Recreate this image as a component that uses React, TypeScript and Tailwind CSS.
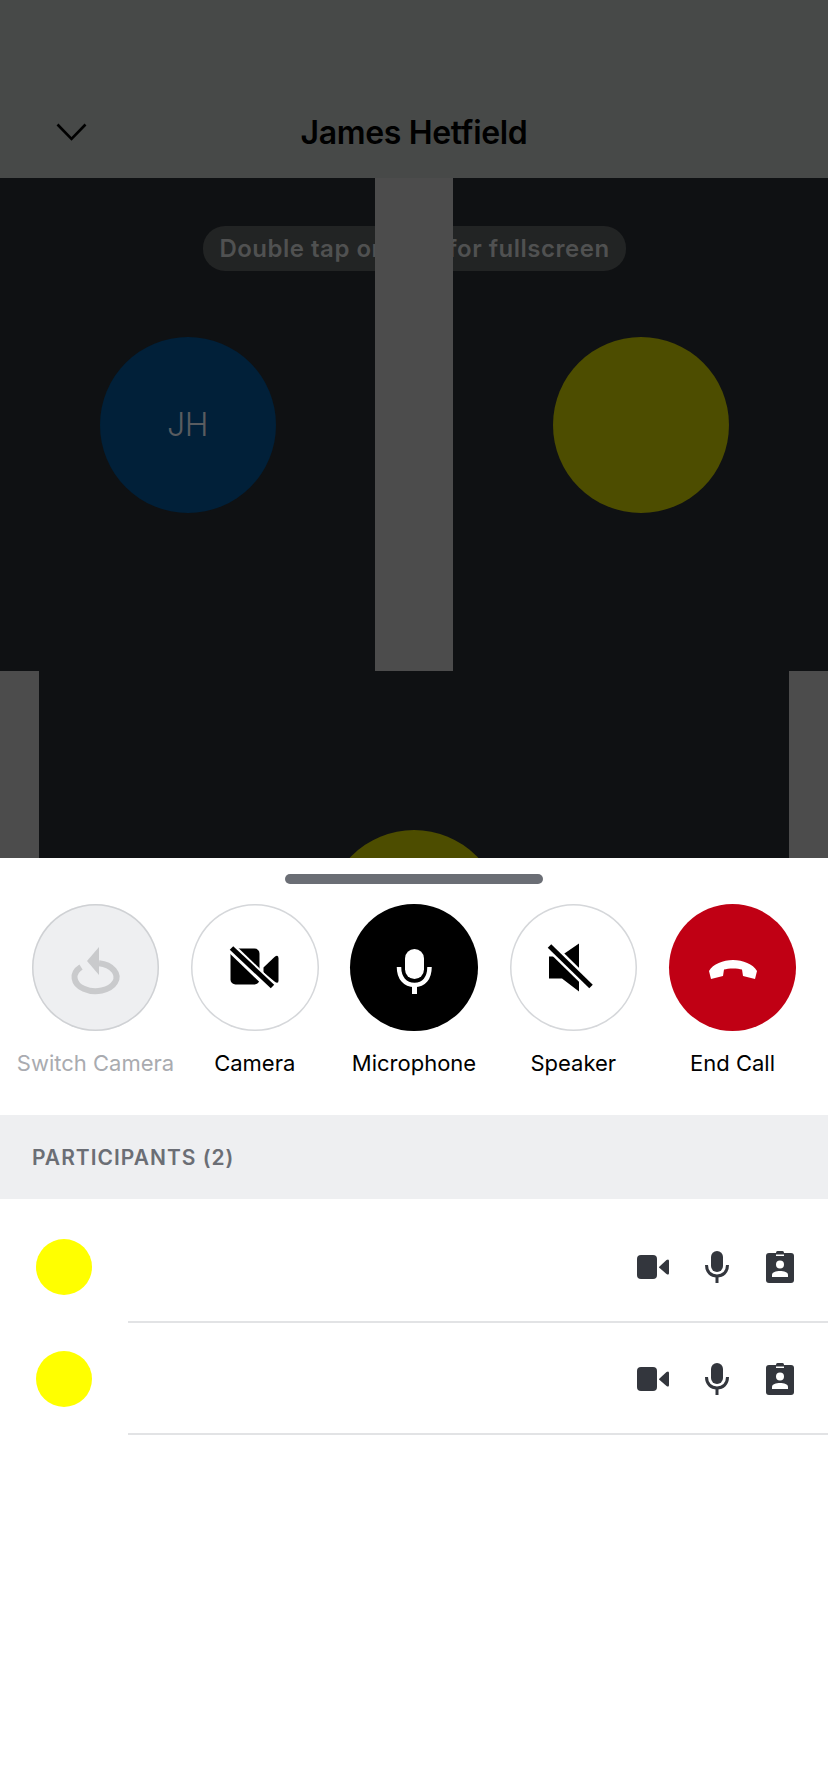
import React from "react";

const controls = [
  { label: "Switch Camera", icon: "switch", circle: "bg-[#eeeff1] shadow-[inset_0_0_0_1.5px_#cfd1d4]", text: "text-[#a9abb0]" },
  { label: "Camera", icon: "camera", circle: "bg-white shadow-[inset_0_0_0_1.5px_#d5d7da]", text: "text-black" },
  { label: "Microphone", icon: "mic", circle: "bg-black", text: "text-black" },
  { label: "Speaker", icon: "speaker", circle: "bg-white shadow-[inset_0_0_0_1.5px_#d5d7da]", text: "text-black" },
  { label: "End Call", icon: "end", circle: "bg-[#c00014]", text: "text-black" },
];

function ControlIcon({ name }: { name: string }) {
  if (name === "switch") {
    return (
      <svg width="80" height="80" viewBox="0 0 80 80">
        <path d="M43 19 L31 33 L43 47 Z" fill="#c9cacc" />
        <path d="M43 35.3 A21 14 0 1 1 25 39" fill="none" stroke="#c9cacc" strokeWidth="6" />
      </svg>
    );
  }
  if (name === "camera") {
    return (
      <svg width="52" height="46" viewBox="28.5 24.5 52 46">
        <rect x="30" y="28" width="29" height="36" rx="5" fill="#000" />
        <path d="M63 47 L74 36.5 Q78 33.5 78 38 V60 Q78 64 74 61 L63 52 Z" fill="#000" />
        <path d="M27 24 L75 70" stroke="#fff" strokeWidth="10" />
        <path d="M31 27.5 L72 66" stroke="#000" strokeWidth="5" />
      </svg>
    );
  }
  if (name === "mic") {
    return (
      <svg width="80" height="80" viewBox="0 0 80 80">
        <rect x="31" y="21" width="19" height="30" rx="9.5" fill="#fff" />
        <path d="M25 39 C25 50 31 57 40.5 57 C50 57 55.5 50 55.5 39" fill="none" stroke="#fff" strokeWidth="4.5" />
        <path d="M40.5 56 V66" stroke="#fff" strokeWidth="5" />
      </svg>
    );
  }
  if (name === "speaker") {
    return (
      <svg width="52" height="56" viewBox="27 19.5 52 56">
        <path d="M29 36 H40 L59 23 V71 L42 58 H29 Z" fill="#000" />
        <path d="M25 21 L75 70" stroke="#fff" strokeWidth="10" />
        <path d="M29.5 25.5 L71 66" stroke="#000" strokeWidth="5" />
      </svg>
    );
  }
  return (
    <svg width="80" height="80" viewBox="0 0 80 80">
      <path
        d="M18 51 L16 43 C20 36 30 32 40 32 C50 32 60 36 64 43 L62 51 L50 48 L49 41.5 C45 40 35 40 31 41.5 L30 48 Z"
        fill="#fff"
      />
    </svg>
  );
}

function RowIcons() {
  return (
    <div className="flex items-center">
      <svg className="mr-[36px]" width="32" height="24" viewBox="0 0 32 24">
        <rect x="0" y="0" width="20" height="24" rx="4" fill="#33363d" />
        <path d="M22 12 L29.5 5 Q32 3.5 32 6 V18 Q32 20.5 29.5 19 L22 12.5 Z" fill="#33363d" />
      </svg>
      <svg className="mr-[37px]" width="24" height="32" viewBox="0 0 24 32">
        <rect x="6" y="0" width="12" height="21" rx="6" fill="#33363d" />
        <path d="M1.5 14 C1.5 21 6 25 12 25 C18 25 22.5 21 22.5 14" fill="none" stroke="#33363d" strokeWidth="3" />
        <path d="M12 24 V32" stroke="#33363d" strokeWidth="3" />
      </svg>
      <svg width="28" height="32" viewBox="0 0 28 32">
        <rect x="0" y="2" width="28" height="30" rx="3" fill="#33363d" />
        <rect x="10" y="0" width="8" height="3" rx="1.5" fill="#33363d" />
        <rect x="10" y="3.5" width="8" height="1.5" fill="#fff" />
        <circle cx="14" cy="13.5" r="4" fill="#fff" />
        <path d="M6 26 V24 C6 21 10 20 14 20 C18 20 22 21 22 24 V26 Z" fill="#fff" />
      </svg>
    </div>
  );
}

export default function App() {
  return (
    <div className="min-h-[1792px] bg-white font-['Inter',sans-serif]">
      {/* Header */}
      <header className="relative flex h-[178px] items-end justify-center bg-[#474948] pb-[22px]">
        <svg className="absolute bottom-[37px] left-[56px]" width="31" height="18" viewBox="0 0 31 18">
          <path d="M1.5 1.5 L15.5 16 L29.5 1.5" fill="none" stroke="#000" strokeWidth="2.6" />
        </svg>
        <h1 className="text-[32px] leading-[46px] font-semibold tracking-[-0.35px] text-black">James Hetfield</h1>
      </header>

      {/* Video grid */}
      <main className="relative h-[680px] overflow-hidden bg-[#0f1113]">
        <div className="absolute top-[48px] left-[203px] flex h-[45px] w-[423px] items-center justify-center rounded-[22px] bg-[#222424]">
          <span className="text-[24px] leading-none font-semibold tracking-[0.5px] whitespace-nowrap text-[#505151]">
            Double tap on grid for fullscreen
          </span>
        </div>
        <div className="grid h-[493px] grid-cols-[375px_78px_375px]">
          <div className="flex items-center justify-center">
            <div className="relative flex h-[176px] w-[176px] items-center justify-center rounded-full bg-[#012039]">
              <span className="text-[32px] font-light tracking-[-0.5px] text-[#595c60]">JH</span>
            </div>
          </div>
          <div className="relative bg-[#4c4c4c]" />
          <div className="flex items-center justify-center">
            <div className="relative h-[176px] w-[176px] rounded-full bg-[#4d4d00]" />
          </div>
        </div>
        <div className="grid h-[493px] grid-cols-[39px_750px_39px]">
          <div className="bg-[#4c4c4c]" />
          <div className="flex items-center justify-center">
            <div className="h-[176px] w-[176px] rounded-full bg-[#4d4d00]" />
          </div>
          <div className="bg-[#4c4c4c]" />
        </div>
      </main>

      {/* Bottom sheet */}
      <section className="flex flex-col">
        <div className="flex justify-center pt-[16px]">
          <div className="h-[10px] w-[258px] rounded-full bg-[#6b6e75]" />
        </div>
        <div className="flex justify-center gap-[31.75px] pt-[20px]">
          {controls.map((c) => (
            <div key={c.label} className="relative flex w-[127.5px] flex-col items-center">
              <div className={`flex h-[127px] w-[127.5px] items-center justify-center rounded-full ${c.circle}`}>
                <ControlIcon name={c.icon} />
              </div>
              <span className={`mt-[17px] text-[22px] leading-[30px] whitespace-nowrap ${c.text}`}>{c.label}</span>
            </div>
          ))}
        </div>

        <div className="mt-[37px] flex h-[84px] items-center bg-[#eeeff1] pt-[1px] pl-[32px]">
          <span className="text-[21px] font-semibold tracking-[1px] text-[#6b6e75]">PARTICIPANTS (2)</span>
        </div>

        <ul className="pt-[12px]">
          {[0, 1].map((i) => (
            <li key={i} className="flex h-[112px] items-center">
              <div className="ml-[36px] h-[56px] w-[56px] rounded-full bg-[#ffff00]" />
              <div className="ml-[36px] flex h-full flex-1 items-center justify-end border-b-2 border-[#e2e3e5] pt-[2px] pr-[34px]">
                <RowIcons />
              </div>
            </li>
          ))}
        </ul>
      </section>
    </div>
  );
}
